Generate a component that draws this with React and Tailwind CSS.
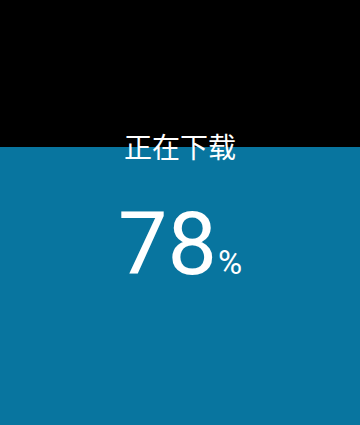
import React from "react";

export default function App() {
  const progress = 78;

  return (
    <div
      className="w-[360px] h-[425px] flex flex-col items-center text-white bg-[linear-gradient(to_bottom,#000_147px,#08759f_147px)]"
      style={{ fontFamily: "Roboto, 'Noto Sans CJK SC', sans-serif" }}
    >
      <div className="mt-[135px] text-[28px] leading-none">正在下载</div>
      <div className="mt-[37px] flex items-baseline leading-none">
        <span className="text-[88px]">{progress}</span>
        <span className="ml-[1px] text-[33px]">%</span>
      </div>
    </div>
  );
}
